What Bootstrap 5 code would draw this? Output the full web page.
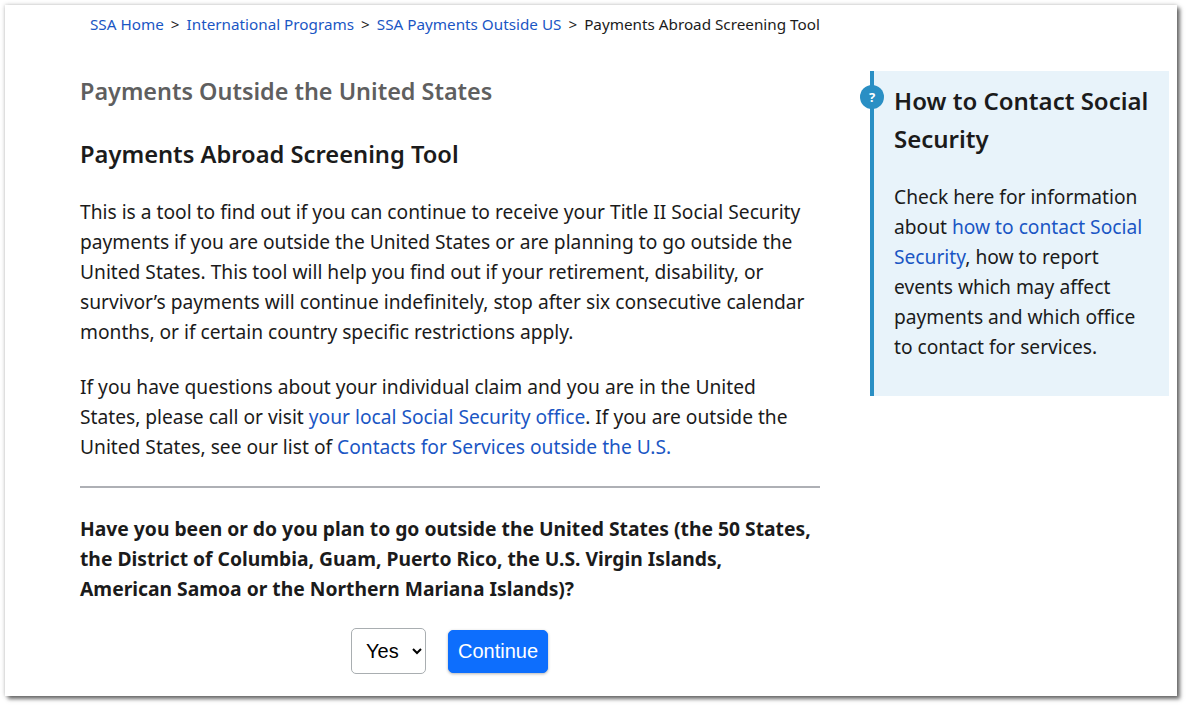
<!doctype html>
<html lang="en">
<head>
<meta charset="utf-8">
<title>Payments Abroad Screening Tool</title>
<link href="https://cdn.jsdelivr.net/npm/bootstrap@5.3.0/dist/css/bootstrap.min.css" rel="stylesheet">
<style>
html,body{height:705px;overflow:hidden;background:#fff}
body{font-family:"Noto Sans",sans-serif;color:#1b1b1b}
a{color:#1a56c4;text-decoration:none}
.frame{margin:5px 9px 0 5px;height:691px;background:#fff;box-shadow:3px 3px 4px 0 rgba(0,0,0,.55),0 0 4px rgba(0,0,0,.25);overflow:hidden}
.crumbs{padding:9px 0 0 85px;font-size:15.25px;line-height:20px;height:66px;gap:7px}
.main-col{width:740px;margin-left:75px}
.side-col{width:299px;margin-left:50px}
.title-grey{font-size:23.4px;font-weight:600;line-height:40px;color:#5f5f5f;margin:0 0 23px}
.title-dark{font-size:23.7px;font-weight:600;line-height:40px;color:#1b1b1b;margin:0 0 23px}
.para{font-size:19.2px;line-height:30px;margin:0 0 25px}
.rule{border:0;border-top:2px solid #aeb0b5;opacity:1;margin:-1px 0 26px}
.ask{font-size:19.3px;line-height:30px;font-weight:700;margin:0 0 24px;padding-right:4px}
.answer{gap:22px;padding-left:271px}
.pick{font-family:"Liberation Sans",sans-serif;font-size:20px;width:75px;height:46px;color:#000;padding:0 0 0 10px;border:1px solid #a9aeb1;border-radius:5px;background:#fff}
.go{font-family:"Liberation Sans",sans-serif;font-size:20px;width:100px;height:43px;padding:0;border-radius:5px;box-shadow:0 1px 3px rgba(0,0,0,.3)}
.aside-box{background:#e8f3fa;border-left:4px solid #2a8fc4;padding:11px 10px 34px 20px;height:325px}
.aside-head{font-size:24px;font-weight:600;line-height:38px;margin:0 0 24px}
.aside-text{font-size:19.2px;line-height:30px;margin:0;padding-right:8px}
.qmark{position:absolute;left:-14px;top:14px;width:24px;height:24px;border-radius:50%;background:#2a8fc4;color:#fff;font-size:13px;font-weight:700;line-height:24px;text-align:center}
</style>
</head>
<body>
<div class="frame">
  <nav class="crumbs d-flex" aria-label="breadcrumb">
    <a href="#">SSA Home</a><span>&gt;</span>
    <a href="#">International Programs</a><span>&gt;</span>
    <a href="#">SSA Payments Outside US</a><span>&gt;</span>
    <span>Payments Abroad Screening Tool</span>
  </nav>
  <div class="d-flex">
    <main class="main-col">
      <h1 class="title-grey">Payments Outside the United States</h1>
      <h2 class="title-dark">Payments Abroad Screening Tool</h2>
      <p class="para">This is a tool to find out if you can continue to receive your Title II Social Security payments if you are outside the United States or are planning to go outside the United States. This tool will help you find out if your retirement, disability, or survivor’s payments will continue indefinitely, stop after six consecutive calendar months, or if certain country specific restrictions apply.</p>
      <p class="para">If you have questions about your individual claim and you are in the United States, please call or visit <a href="#">your local Social Security office</a>. If you are outside the United States, see our list of <a href="#">Contacts for Services outside the U.S.</a></p>
      <hr class="rule">
      <p class="ask">Have you been or do you plan to go outside the United States (the 50 States, the District of Columbia, Guam, Puerto Rico, the U.S. Virgin Islands, American Samoa or the Northern Mariana Islands)?</p>
      <form class="answer d-flex align-items-center">
        <select class="pick" aria-label="Answer"><option>Yes</option><option>No</option></select>
        <button type="button" class="btn btn-primary go">Continue</button>
      </form>
    </main>
    <aside class="side-col">
      <div class="aside-box position-relative">
        <span class="qmark">?</span>
        <h2 class="aside-head">How to Contact Social Security</h2>
        <p class="aside-text">Check here for information about <a href="#">how to contact Social Security</a>, how to report events which may affect payments and which office to contact for services.</p>
      </div>
    </aside>
  </div>
</div>
</body>
</html>
